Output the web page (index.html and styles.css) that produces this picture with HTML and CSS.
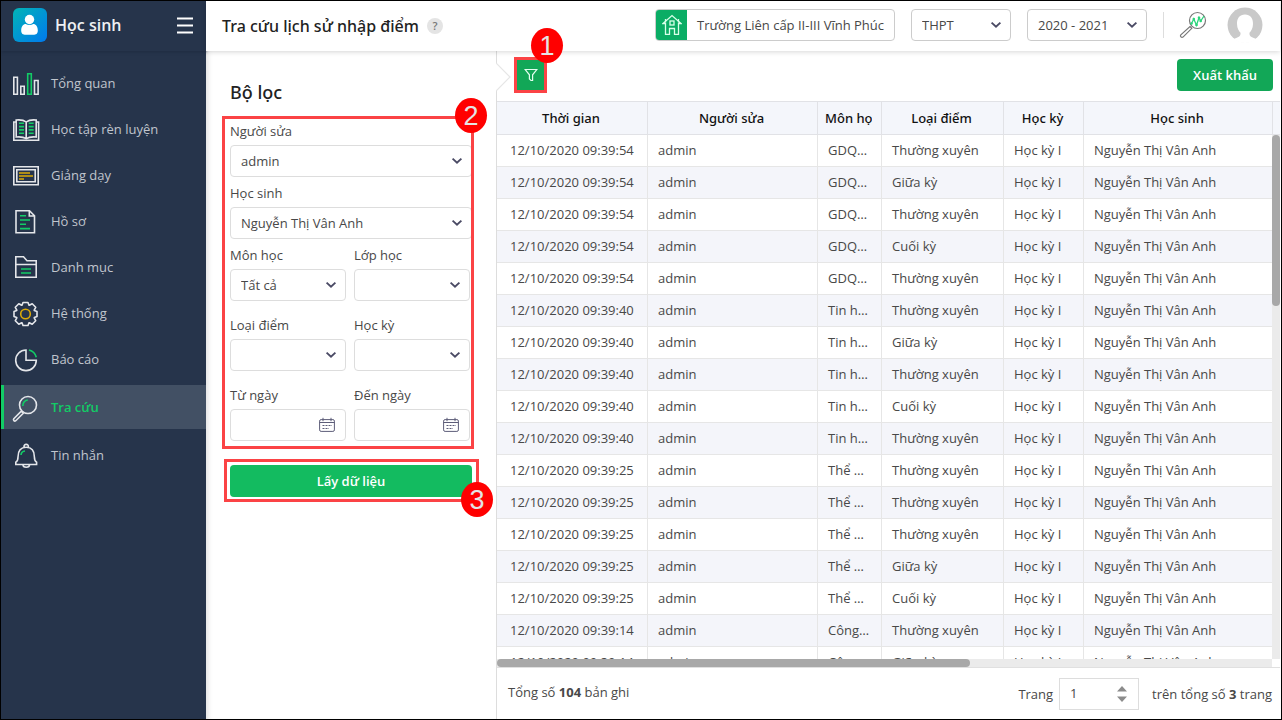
FILE: index.html
```html
<!DOCTYPE html>
<html lang="vi">
<head>
<meta charset="utf-8">
<title>Tra cứu lịch sử nhập điểm</title>
<link rel="stylesheet" href="styles.css">
</head>
<body>
<svg class="defs" aria-hidden="true">
  <symbol id="chevron" viewBox="0 0 12 8"><path d="M1.6 1.6 6 5.6l4.400-4" fill="none" stroke="#4a4a64" stroke-width="1.900"/></symbol>
  <symbol id="calendar" viewBox="0 0 16 16">
    <g fill="none" stroke="#5c5c78">
      <rect x=".6" y="2.600" width="14.800" height="11.800" rx="1.500"/>
      <path d="M.6 5.500h14.800M4 .8v3.400M12 .8v3.400"/>
      <path d="M3.500 8.500h9.500M3.500 11.500h6.500" stroke-dasharray="2 1"/>
    </g>
  </symbol>
</svg>
<div class="app">
  <aside class="sidebar">
    <div class="brand">
      <svg class="brand-logo" viewBox="0 0 34 34" aria-hidden="true">
        <defs><linearGradient id="logo" x1="0" y1="0" x2="1" y2="1"><stop offset="0" stop-color="#02b5b6"/><stop offset="1" stop-color="#0079ee"/></linearGradient></defs>
        <rect width="34" height="34" rx="6" fill="url(#logo)"/>
        <circle cx="16.500" cy="11.500" r="4.700" fill="#fff"/>
        <path d="M8.200 22.500c0-4 2-6.500 4.600-6.500 1 .7 2.200 1.100 3.700 1.100s2.700-.4 3.700-1.100c2.600 0 4.600 2.500 4.600 6.500 0 3.300-1.800 4.300-4.500 4.300h-7.600c-2.700 0-4.500-1-4.500-4.300z" fill="#fff"/>
      </svg>
      <span class="brand-name">Học sinh</span>
      <button class="menu-toggle" type="button" aria-label="Menu"><svg viewBox="0 0 16 17"><path d="M0 1.500h16M0 8.500h16M0 15.500h16" stroke="#fff" stroke-width="2.200"/></svg></button>
    </div>
    <nav class="menu">
      <a href="#"><svg viewBox="0 0 28 28"><path d="M1.800 8.300h3.600v17H1.800zM8.800 17.300h3.400v8H8.800zM22.500 11.500h3.600v13.800h-3.600z"/><path class="g" d="M15.700 4.700h3.600v20.600h-3.600z"/></svg>Tổng quan</a>
      <a href="#"><svg viewBox="0 0 28 28"><path d="M4 7H1.800v18.200h24.800V7h-2.200"/><path d="M14.200 7c-2.500-2-6-2.400-10-2v17c4-.4 7.500 0 10 1.700 2.500-1.700 6-2.100 10-1.700V5c-4-.4-7.500 0-10 2zM14.200 7v17"/><path class="g" d="M7 8.300h5M7 11.600h5M7 14.900h5M7 18.200h5M16.700 8.300h5M16.700 11.600h5M16.700 14.900h5M16.700 18.200h5"/></svg>Học tập rèn luyện</a>
      <a href="#"><svg viewBox="0 0 28 28"><path d="M1.800 5.800h24.400v18H1.800z"/><path d="M4.800 8.800h18.400v12H4.800z"/><path class="y" d="M7 12h11M7 15h14M7 18h5"/></svg>Giảng dạy</a>
      <a href="#"><svg viewBox="0 0 28 28"><path d="M4 3.800h13.500l5 5v17H4zM17.300 3.800v5.200h5.200"/><path class="g" d="M8 8.700h6M8 13h10M8 17.300h6M8 21.600h10"/></svg>Hồ sơ</a>
      <a href="#"><svg viewBox="0 0 28 28"><path d="M3.800 24.200V3.800h7.700l3.500 4h9.200v16.400zM3.800 11.500h20.400"/><path class="g" d="M9 16h10M9 20h10"/></svg>Danh mục</a>
      <a href="#"><svg viewBox="0 0 28 28"><path stroke-linejoin="round" d="M10 6.200 11 3.500h5l1 2.700.3.100 2.900-1.500 3.500 3.500-1.500 2.900.1.300 2.700 1v5l-2.700 1-.1.300 1.500 2.900-3.500 3.500-2.900-1.500-.3.100-1 2.700h-5l-1-2.700-.3-.1-2.900 1.500-3.500-3.500 1.500-2.900-.1-.3-2.700-1v-5l2.700-1 .1-.3-1.500-2.900 3.500-3.500 2.900 1.500z"/><circle class="y" cx="13.500" cy="15" r="4.800"/></svg>Hệ thống</a>
      <a href="#"><svg viewBox="0 0 28 28"><path d="M14 5a10.300 10.300 0 1 0 10.300 10.300H14z"/><path class="g" d="M17 5c4 1 6.300 3.500 7.300 7.300"/></svg>Báo cáo</a>
      <a href="#" class="active"><svg viewBox="0 0 28 28"><circle cx="16" cy="12" r="8.500"/><path d="m9.300 18.200 2 2-7.500 7.500c-1.400 1-3-.6-2-2z"/><path class="g" d="M10.800 13c0-3.500 2-5.500 5-6"/></svg>Tra cứu</a>
      <a href="#"><svg viewBox="0 0 28 28"><path d="M3.800 23.500v-2.300c2-1 2.200-2.200 2.200-5.200 0-6 3-9.700 8.200-9.700s8.200 3.700 8.200 9.700c0 3 .2 4.200 2.200 5.200v2.300zM11 24c0 3 6.500 3 6.500 0M12 6.200c-.6-3.800 5-3.800 4.400 0"/><path class="g" d="M9 14c.2-2.500 1.500-3.700 4-4"/></svg>Tin nhắn</a>
    </nav>
  </aside>

  <div class="page">
    <header class="topbar">
      <h1>Tra cứu lịch sử nhập điểm</h1>
      <button class="help" type="button" aria-label="Trợ giúp">?</button>
      <div class="tools">
        <div class="school">
          <span class="home"><svg viewBox="0 0 20 22" aria-hidden="true"><g fill="none" stroke="#d8ffe9" stroke-width="1.300"><path d="M1 9.500 10 1.500l9 8h-2.500v10.800h-4V14.500h-5v5.800h-4V9.500z"/><rect x="8" y="7" width="4" height="4"/><path d="M3.500 5v3.500M16.500 5v3.500"/></g></svg></span>
          <span class="school-name">Trường Liên cấp II-III Vĩnh Phúc</span>
        </div>
        <div class="pick level"><select aria-label="Cấp học"><option>THPT</option></select><svg class="chev"><use href="#chevron"/></svg></div>
        <div class="pick year"><select aria-label="Năm học"><option>2020 - 2021</option></select><svg class="chev"><use href="#chevron"/></svg></div>
        <div class="account">
          <button class="lookup" type="button" aria-label="Tra cứu nhanh"><svg viewBox="0 0 28 28"><g fill="none" stroke="#777" stroke-width="1.200"><circle cx="18.500" cy="9.500" r="8"/><path d="m11 15.500 1.800 1.800-8.800 8.800c-1.500 1-3.300-.8-2.200-2.200z"/></g><path d="m12.500 12.500 2.300-4.500 2.700 6.200 2.500-7.500 1.700 3.300 3.300-5" fill="none" stroke="#2bd57b" stroke-width="1.300"/><g fill="#2bd57b"><circle cx="12.500" cy="12.500" r="1.300"/><circle cx="14.800" cy="8" r="1.300"/><circle cx="17.500" cy="14" r="1.300"/><circle cx="20" cy="6.800" r="1.300"/><circle cx="21.700" cy="10" r="1.300"/></g></svg></button>
          <button class="avatar" type="button" aria-label="Tài khoản"><svg viewBox="0 0 36 36"><circle cx="18" cy="18" r="17.500" fill="#c9c9c9"/><path d="M18 7.500c5.200 0 8.200 3.700 8 9.500-.1 4.300-1.700 7-3.500 8.800-.3 3.200 1.200 4.300 5 5.500l1.500.7V36H7v-4l1.500-.7c3.800-1.200 5.300-2.300 5-5.500-1.800-1.800-3.400-4.500-3.500-8.800-.2-5.800 2.800-9.500 8-9.500z" fill="#fff"/></svg></button>
        </div>
      </div>
    </header>

    <div class="content">
      <section class="filter">
        <h2>Bộ lọc</h2>
        <form>
          <div class="fields">
            <div class="field"><label for="editor">Người sửa</label><div class="pick"><select id="editor"><option>admin</option></select><svg class="chev"><use href="#chevron"/></svg></div></div>
            <div class="field"><label for="student">Học sinh</label><div class="pick"><select id="student"><option>Nguyễn Thị Vân Anh</option></select><svg class="chev"><use href="#chevron"/></svg></div></div>
            <div class="pairs">
              <div class="field"><label for="subject">Môn học</label><div class="pick"><select id="subject"><option>Tất cả</option></select><svg class="chev"><use href="#chevron"/></svg></div></div>
              <div class="field"><label for="class">Lớp học</label><div class="pick"><select id="class"><option></option></select><svg class="chev"><use href="#chevron"/></svg></div></div>
              <div class="field"><label for="kind">Loại điểm</label><div class="pick"><select id="kind"><option></option></select><svg class="chev"><use href="#chevron"/></svg></div></div>
              <div class="field"><label for="term">Học kỳ</label><div class="pick"><select id="term"><option></option></select><svg class="chev"><use href="#chevron"/></svg></div></div>
              <div class="field"><label for="from">Từ ngày</label><div class="pick"><input id="from" type="text"><svg class="cal"><use href="#calendar"/></svg></div></div>
              <div class="field"><label for="to">Đến ngày</label><div class="pick"><input id="to" type="text"><svg class="cal"><use href="#calendar"/></svg></div></div>
            </div>
            <div class="mark mark-fields"><span class="num">2</span></div>
          </div>
          <div class="submit">
            <button class="primary" type="button">Lấy dữ liệu</button>
            <div class="mark mark-submit"><span class="num">3</span></div>
          </div>
        </form>
      </section>

      <section class="results">
        <div class="toolbar">
          <svg class="notch" viewBox="0 0 16 30" aria-hidden="true"><path d="M0 1l14 14L0 29" fill="#fff" stroke="#e6e6e6" stroke-width="1.200"/></svg>
          <div class="filter-toggle">
            <button type="button" aria-label="Bộ lọc"><svg viewBox="0 0 14 14"><path d="M1.200 1.500h11.600L8.600 6.800v5.700H7L5.400 11V6.800z" fill="none" stroke="#e4fff0" stroke-width="1.200"/></svg></button>
            <div class="mark mark-toggle"><span class="num">1</span></div>
          </div>
          <button class="export" type="button">Xuất khẩu</button>
        </div>

        <div class="grid">
          <table>
            <colgroup><col class="c-time"><col class="c-editor"><col class="c-subject"><col class="c-kind"><col class="c-term"><col><col class="c-end"></colgroup>
            <thead><tr><th>Thời gian</th><th>Người sửa</th><th><div class="clip">Môn học</div></th><th>Loại điểm</th><th>Học kỳ</th><th>Học sinh</th><th></th></tr></thead>
            <tbody>
              <tr><td>12/10/2020 09:39:54</td><td>admin</td><td>GDQP-AN</td><td>Thường xuyên</td><td>Học kỳ I</td><td>Nguyễn Thị Vân Anh</td><td></td></tr>
              <tr><td>12/10/2020 09:39:54</td><td>admin</td><td>GDQP-AN</td><td>Giữa kỳ</td><td>Học kỳ I</td><td>Nguyễn Thị Vân Anh</td><td></td></tr>
              <tr><td>12/10/2020 09:39:54</td><td>admin</td><td>GDQP-AN</td><td>Thường xuyên</td><td>Học kỳ I</td><td>Nguyễn Thị Vân Anh</td><td></td></tr>
              <tr><td>12/10/2020 09:39:54</td><td>admin</td><td>GDQP-AN</td><td>Cuối kỳ</td><td>Học kỳ I</td><td>Nguyễn Thị Vân Anh</td><td></td></tr>
              <tr><td>12/10/2020 09:39:54</td><td>admin</td><td>GDQP-AN</td><td>Thường xuyên</td><td>Học kỳ I</td><td>Nguyễn Thị Vân Anh</td><td></td></tr>
              <tr><td>12/10/2020 09:39:40</td><td>admin</td><td>Tin học</td><td>Thường xuyên</td><td>Học kỳ I</td><td>Nguyễn Thị Vân Anh</td><td></td></tr>
              <tr><td>12/10/2020 09:39:40</td><td>admin</td><td>Tin học</td><td>Giữa kỳ</td><td>Học kỳ I</td><td>Nguyễn Thị Vân Anh</td><td></td></tr>
              <tr><td>12/10/2020 09:39:40</td><td>admin</td><td>Tin học</td><td>Thường xuyên</td><td>Học kỳ I</td><td>Nguyễn Thị Vân Anh</td><td></td></tr>
              <tr><td>12/10/2020 09:39:40</td><td>admin</td><td>Tin học</td><td>Cuối kỳ</td><td>Học kỳ I</td><td>Nguyễn Thị Vân Anh</td><td></td></tr>
              <tr><td>12/10/2020 09:39:40</td><td>admin</td><td>Tin học</td><td>Thường xuyên</td><td>Học kỳ I</td><td>Nguyễn Thị Vân Anh</td><td></td></tr>
              <tr><td>12/10/2020 09:39:25</td><td>admin</td><td>Thể dục</td><td>Thường xuyên</td><td>Học kỳ I</td><td>Nguyễn Thị Vân Anh</td><td></td></tr>
              <tr><td>12/10/2020 09:39:25</td><td>admin</td><td>Thể dục</td><td>Thường xuyên</td><td>Học kỳ I</td><td>Nguyễn Thị Vân Anh</td><td></td></tr>
              <tr><td>12/10/2020 09:39:25</td><td>admin</td><td>Thể dục</td><td>Thường xuyên</td><td>Học kỳ I</td><td>Nguyễn Thị Vân Anh</td><td></td></tr>
              <tr><td>12/10/2020 09:39:25</td><td>admin</td><td>Thể dục</td><td>Giữa kỳ</td><td>Học kỳ I</td><td>Nguyễn Thị Vân Anh</td><td></td></tr>
              <tr><td>12/10/2020 09:39:25</td><td>admin</td><td>Thể dục</td><td>Cuối kỳ</td><td>Học kỳ I</td><td>Nguyễn Thị Vân Anh</td><td></td></tr>
              <tr><td>12/10/2020 09:39:14</td><td>admin</td><td>Công nghệ</td><td>Thường xuyên</td><td>Học kỳ I</td><td>Nguyễn Thị Vân Anh</td><td></td></tr>
              <tr><td>12/10/2020 09:39:14</td><td>admin</td><td>Công nghệ</td><td>Giữa kỳ</td><td>Học kỳ I</td><td>Nguyễn Thị Vân Anh</td><td></td></tr>
            </tbody>
          </table>
          <div class="bar bar-y"><div class="thumb"></div></div>
          <div class="bar bar-x"><div class="thumb"></div></div>
        </div>

        <footer class="pager">
          <span class="total">Tổng số <b>104</b> bản ghi</span>
          <div class="paging">
            <label for="page">Trang</label>
            <div class="spin"><input id="page" type="text" value="1"><svg viewBox="0 0 10 16"><path d="M5 0l5 5.500H0zM0 10.500h10L5 16z" fill="#8c8c8c"/></svg></div>
            <span>trên tổng số <b>3</b> trang</span>
          </div>
        </footer>
      </section>
    </div>
  </div>
</div>
</body>
</html>
```

FILE: styles.css
```css
* { box-sizing: border-box; }
body { margin: 0; font: 13px/20px "Open Sans", "Noto Sans", sans-serif; color: #484848; background: #fff; }
button, input, select { font: inherit; color: inherit; margin: 0; }
button { border: 0; padding: 0; background: none; cursor: pointer; }
svg { display: block; flex: none; }
.defs { position: absolute; width: 0; height: 0; }
.app { display: flex; height: 100vh; padding-right: 1px; border: 1px solid #000; overflow: hidden; }

/* Sidebar */
.sidebar { flex: none; width: 205px; background: #26344b; color: #c0c5cd; }
.brand { display: flex; align-items: center; height: 50px; padding: 0 13px 2px 12px; box-shadow: 0 1px 3px #1f2c41; }
.brand-logo { width: 34px; height: 34px; }
.brand-name { margin-left: 8px; padding-bottom: 1px; font-size: 16px; font-weight: 600; color: #eef0f3; }
.menu-toggle { margin-left: auto; }
.menu-toggle svg { width: 16px; height: 17px; }
.menu { display: flex; flex-direction: column; gap: 2px; padding-top: 10px; }
.menu a { display: flex; align-items: center; gap: 11px; height: 44px; padding-left: 11px; color: inherit; text-decoration: none; }
.menu svg { width: 28px; height: 28px; overflow: visible; fill: none; stroke: #e4e6ea; stroke-width: 1.6; }
.menu .g { stroke: #12cc66; }
.menu .y { stroke: #dcab08; }
.menu .active { margin: 2px 0; border-left: 3px solid #12cc66; padding-left: 8px; background: #425064; color: #12cc66; font-weight: 600; }

/* Top bar */
.page { flex: 1; min-width: 0; display: flex; flex-direction: column; }
.topbar { position: relative; z-index: 1; flex: none; display: flex; align-items: center; height: 50px; padding: 0 17px 0 16px; background: #fff; box-shadow: 0 1px 5px rgba(0, 0, 0, .16); }
h1 { margin: 0; font-family: "Noto Sans", sans-serif; font-size: 16px; font-weight: 500; color: #222; white-space: nowrap; }
.help { width: 16px; height: 16px; margin-left: 8px; border-radius: 50%; background: #e4e4e4; color: #777; font-size: 11px; font-weight: 600; line-height: 16px; }
.tools { display: flex; align-items: center; gap: 16px; margin: 0 0 2px auto; }
.school { display: flex; align-items: center; height: 32px; border: 1px solid #ccc; border-radius: 4px; overflow: hidden; }
.home { display: flex; align-items: center; justify-content: center; width: 31px; height: 32px; background: #0aad65; }
.home svg { width: 20px; height: 22px; }
.school-name { padding: 0 10px; white-space: nowrap; }
.pick { position: relative; }
.pick select, .pick input { display: block; width: 100%; height: 32px; padding: 0 24px 0 10px; border: 1px solid #ddd; border-radius: 4px; background: #fff; appearance: none; outline: 0; }
.tools select { border-color: #ccc; }
.level { width: 100px; }
.year { width: 120px; }
.chev { position: absolute; right: 9px; top: 12px; width: 12px; height: 8px; pointer-events: none; }
.cal { position: absolute; right: 11px; top: 8px; width: 16px; height: 16px; }
.account { display: flex; align-items: center; gap: 20px; }
.account::before { content: ""; width: 1px; height: 26px; margin-right: -5px; background: #ddd; }
.lookup svg { width: 28px; height: 28px; }
.avatar svg { width: 36px; height: 36px; border-radius: 50%; }

/* Filter panel */
.content { flex: 1; min-height: 0; display: flex; }
.filter { flex: none; width: 291px; padding: 29px 24px 0; border-right: 1px solid #ddd; box-shadow: inset 5px 0 5px -3px rgba(0, 0, 0, .12); }
h2 { margin: 0 0 19px; font-family: "Noto Sans", sans-serif; font-size: 18px; line-height: 24px; font-weight: 500; color: #222; }
.fields { position: relative; display: grid; gap: 8px; }
.pairs { display: grid; grid-template-columns: 1fr 1fr; gap: 16px 8px; padding-right: 2px; }
.field label { display: block; margin-bottom: 6px; line-height: 16px; }
.submit { position: relative; margin-top: 24px; }
.primary { width: 100%; height: 32px; border-radius: 4px; background: #13bb60; color: #fff; font-weight: 600; }

/* Numbered callouts */
.mark { position: absolute; z-index: 2; border: 3px solid #fb4345; pointer-events: none; }
.mark-fields { inset: -7px -2px -8px -8px; }
.mark-submit { inset: -6px -7px -5px -6px; }
.mark-toggle { inset: -2px -1px; }
.num { position: absolute; width: 32px; height: 35px; border-radius: 50%; background: #f00; color: #e4e4e4; font: 27px/36px "Liberation Sans", Arial, sans-serif; text-align: center; }
.mark-fields .num { right: -16px; top: -21px; }
.mark-submit .num { right: -17px; bottom: -18px; }
.mark-toggle .num { right: -19px; top: -32px; }

/* Results */
.results { flex: 1; min-width: 0; display: flex; flex-direction: column; }
.toolbar { position: relative; z-index: 2; flex: none; display: flex; align-items: center; height: 50px; padding: 0 7px 2px 18px; }
.notch { position: absolute; left: -1px; top: 11px; width: 16px; height: 30px; }
.filter-toggle { position: relative; }
.filter-toggle button { display: flex; align-items: center; justify-content: center; width: 31px; height: 32px; background: #12a757; }
.filter-toggle svg { width: 14px; height: 14px; }
.export { height: 32px; margin-left: auto; padding: 0 16px; border-radius: 4px; background: #12a757; color: #fff; font-weight: 600; }
.grid { position: relative; flex: 1; min-height: 0; overflow: hidden; border-bottom: 1px solid #e0e0e0; }
table { width: 100%; table-layout: fixed; border-collapse: separate; border-spacing: 0; }
.c-time { width: 151px; }
.c-editor { width: 170px; }
.c-subject { width: 64px; }
.c-kind { width: 122px; }
.c-term { width: 80px; }
.c-end { width: 7px; }
th { height: 34px; padding: 0 9px 0 7px; border: solid #e1e2e6; border-width: 1px 1px 1px 0; background: #f4f6fb; color: #111; font-family: "Noto Sans", sans-serif; font-weight: 500; white-space: nowrap; }
th:last-child, td:last-child { padding: 0; border-right: 0; }
.clip { width: 47px; overflow: hidden; text-align: left; }
td { height: 32px; padding: 0 10px 2px; border: solid #e6e6e6; border-width: 0 1px 1px 0; overflow: hidden; text-overflow: ellipsis; white-space: nowrap; }
td:first-child { padding-left: 13px; }
tbody tr:nth-child(even) { background: #f4f5fa; }
.bar { position: absolute; background: #ebebeb; }
.thumb { border-radius: 4px; background: #a8a8a8; }
.bar-y { top: 34px; right: 0; bottom: 8px; width: 8px; }
.bar-y .thumb { height: 171px; }
.bar-x { left: 0; right: 0; bottom: 0; height: 8px; border-right: 8px solid #fff; }
.bar-x .thumb { width: 61%; height: 8px; }
.pager { flex: none; display: flex; align-items: center; justify-content: space-between; height: 51px; padding: 1px 8px 0 11px; }
.total { padding-bottom: 4px; }
.paging { display: flex; align-items: center; gap: 6px; }
.spin { position: relative; width: 80px; margin-right: 7px; }
.spin input { display: block; width: 100%; height: 32px; padding: 0 30px 2px 10px; border: 1px solid #ddd; background: #fff; outline: 0; }
.spin svg { position: absolute; right: 12px; top: 8px; width: 10px; height: 16px; }
```
